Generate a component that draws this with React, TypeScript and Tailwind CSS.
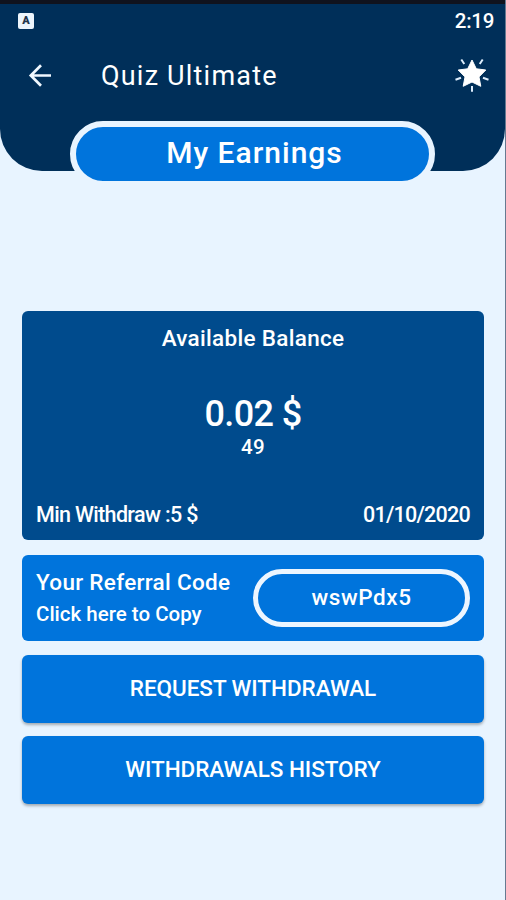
import type { ReactNode } from "react";

function ArrowBack() {
  return (
    <svg className="h-[24px] w-[24px]" viewBox="0 0 24 24" fill="none" stroke="#f0f8ff" strokeWidth="2.7">
      <path d="M23 12.5H3M13 2.3L2.8 12.5L13 22.7" />
    </svg>
  );
}

function ShiningStar() {
  return (
    <svg className="h-[36px] w-[36px]" viewBox="0 0 36 36">
      <path
        d="M18 3L22.3 11.8L31.8 13L25 19.9L26.8 29.3L18 25L9.2 29.3L11 19.9L4.2 13L13.7 11.8Z"
        fill="white"
        stroke="white"
        strokeWidth="1"
        strokeLinejoin="round"
      />
      <path
        d="M7.3 2.5L10.3 7M28.7 2.5L25.7 7M1.5 22.8L7 20.8M34.5 22.8L29 20.8M18 29V34.8"
        stroke="#dcecfb"
        strokeWidth="2"
      />
    </svg>
  );
}

function ActionButton({ children }: { children: ReactNode }) {
  return (
    <button className="flex h-[68px] w-full items-center justify-center rounded-md bg-[#0074dc] pb-0.5 text-[22.5px] leading-none font-medium tracking-[-0.05px] shadow-[0_2px_3px_rgba(0,0,0,0.3)]">
      {children}
    </button>
  );
}

export default function App() {
  return (
    <div className="h-[900px] w-[506px] overflow-hidden border-r border-[#667a91] bg-[#e8f4ff] font-['Roboto',sans-serif] text-white">
      <header className="h-[171px] rounded-b-[42px] border-t-4 border-[#10131e] bg-[#002f59]">
        <div className="flex h-[33px] items-center justify-between pr-[11px] pl-[18px]">
          <div className="flex h-4 w-4 items-center justify-center rounded-xs bg-[#edf5fc] text-[11px] leading-none font-black text-[#24364a]">
            A
          </div>
          <span className="pt-0.5 text-[20.5px] leading-none font-medium tracking-[-0.3px]">2:19</span>
        </div>
        <div className="flex h-[76px] items-center pr-[15px] pl-[28px]">
          <ArrowBack />
          <h1 className="ml-[49px] flex-1 pt-0.5 text-[27px] leading-none tracking-[1.2px]">Quiz Ultimate</h1>
          <ShiningStar />
        </div>
        <div className="mx-auto mt-2 flex h-[66px] w-[365px] items-center justify-center rounded-full border-6 border-[#e8f4ff] bg-[#0074dc]">
          <span className="pb-0.5 pl-1 text-[30px] leading-none font-medium tracking-[1px]">My Earnings</span>
        </div>
      </header>

      <main className="mt-[140px] flex flex-col pr-[21px] pl-[22px]">
        <section className="flex h-[229px] flex-col items-center rounded-md bg-[#004b8d] px-[14px] font-medium">
          <h2 className="mt-[15px] text-[22.5px] leading-6 tracking-[0.3px]">Available Balance</h2>
          <p className="mt-[46px] text-[36px] leading-9 tracking-[-0.6px]">0.02 $</p>
          <p className="mt-[3px] text-[20.5px] leading-6 tracking-[0.3px]">49</p>
          <div className="mt-[44px] flex w-full justify-between text-[21.5px] leading-6">
            <span className="tracking-[-0.65px]">Min Withdraw :5 $</span>
            <span className="tracking-[-0.75px]">01/10/2020</span>
          </div>
        </section>

        <section className="mt-[15px] flex h-[86px] items-center justify-between rounded-md bg-[#0074dc] px-[14px] font-medium">
          <div>
            <p className="text-[22.5px] leading-8 tracking-[0.3px]">Your Referral Code</p>
            <p className="text-[20.5px] leading-8">Click here to Copy</p>
          </div>
          <div className="flex h-[58px] w-[217px] items-center justify-center rounded-full border-5 border-[#edf6ff] text-[22.5px] tracking-[0.6px]">
            wswPdx5
          </div>
        </section>

        <div className="mt-[14px] flex flex-col gap-[13px]">
          <ActionButton>REQUEST WITHDRAWAL</ActionButton>
          <ActionButton>WITHDRAWALS HISTORY</ActionButton>
        </div>
      </main>
    </div>
  );
}
